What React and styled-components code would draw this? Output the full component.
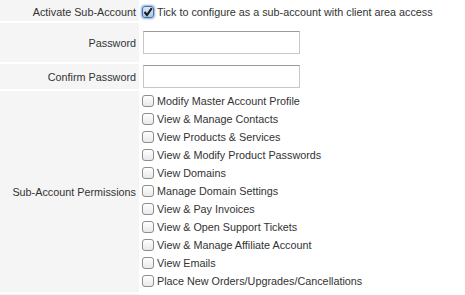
import React from "react";
import styled, { createGlobalStyle } from "styled-components";

const Global = createGlobalStyle`
  html, body { margin: 0; padding: 0; background: #fff; }
  body { font-family: "Liberation Sans", Arial, sans-serif; font-size: 10.8px; color: #333; }
`;

const Form = styled.div`
  display: grid;
  grid-template-columns: 139px 1fr;
  column-gap: 2px;
  row-gap: 2px;
  width: 465px;
`;

const Label = styled.div`
  background: #f5f5f5;
  display: flex;
  align-items: center;
  justify-content: flex-end;
  padding-right: 3px;
  height: ${(p) => p.h}px;
  padding-top: ${(p) => p.pt || 0}px;
  box-sizing: border-box;
  white-space: nowrap;
`;

const Field = styled.div`
  display: flex;
  flex-direction: ${(p) => (p.column ? "column" : "row")};
  align-items: ${(p) => (p.column ? "flex-start" : "center")};
  height: ${(p) => p.h}px;
  padding-top: ${(p) => p.pt || 0}px;
  padding-left: 1px;
  box-sizing: border-box;
`;

const Box = styled.span`
  display: inline-flex;
  align-items: center;
  justify-content: center;
  width: 12px;
  height: 12px;
  box-sizing: border-box;
  border: 1px solid ${(p) => (p.checked ? "#4a6f9c" : "#8d8d8d")};
  border-radius: 3px;
  background: ${(p) =>
    p.checked
      ? "linear-gradient(#dbe8f7, #a9c6ea)"
      : "linear-gradient(#ffffff, #e9e9e9)"};
  box-shadow: ${(p) => (p.checked ? "0 0 2px 1px rgba(88,140,214,0.7)" : "none")};
  flex-shrink: 0;
`;

const Option = styled.label`
  display: flex;
  align-items: center;
  gap: 3px;
  height: 18px;
  white-space: nowrap;
`;

const TextInput = styled.input`
  width: 157px;
  height: 23px;
  box-sizing: border-box;
  border: 1px solid #c8c8c8;
  border-top-color: #9a9a9a;
  background: #fff;
  margin: 0 0 0 1px;
  padding: 2px 4px;
  font: inherit;
`;

const Check = ({ checked }) => (
  <Box checked={checked}>
    {checked && (
      <svg width="10" height="10" viewBox="0 0 10 10">
        <path d="M1.5 5 L4 8 L8.8 1.2" fill="none" stroke="#1a1a1a" strokeWidth="2" />
      </svg>
    )}
  </Box>
);

const perms = [
  "Modify Master Account Profile",
  "View & Manage Contacts",
  "View Products & Services",
  "View & Modify Product Passwords",
  "View Domains",
  "Manage Domain Settings",
  "View & Pay Invoices",
  "View & Open Support Tickets",
  "View & Manage Affiliate Account",
  "View Emails",
  "Place New Orders/Upgrades/Cancellations",
];

export default function App() {
  return (
    <>
      <Global />
      <Form>
        <Label h={21} pt={3}>Activate Sub-Account</Label>
        <Field h={21} pt={3}>
          <Option>
            <Check checked />
            Tick to configure as a sub-account with client area access
          </Option>
        </Field>

        <Label h={39}>Password</Label>
        <Field h={39}>
          <TextInput type="password" />
        </Field>

        <Label h={25}>Confirm Password</Label>
        <Field h={25}>
          <TextInput type="password" />
        </Field>

        <Label h={201}>Sub-Account Permissions</Label>
        <Field h={201} column pt={1}>
          {perms.map((p) => (
            <Option key={p}>
              <Check />
              {p}
            </Option>
          ))}
        </Field>

        <Label h={1} />
        <Field h={1} />
      </Form>
    </>
  );
}
